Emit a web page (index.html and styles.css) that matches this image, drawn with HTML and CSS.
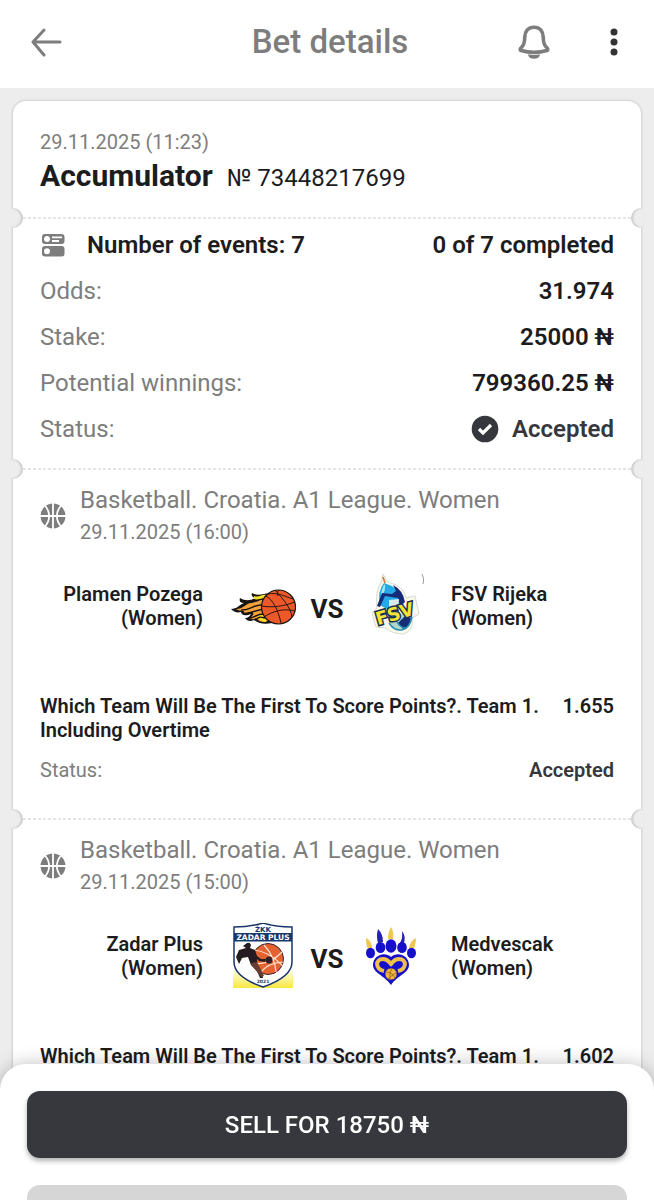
FILE: index.html
```html
<!DOCTYPE html>
<html lang="en">
<head>
<meta charset="utf-8">
<meta name="viewport" content="width=device-width, initial-scale=1">
<title>Bet details</title>
<link rel="stylesheet" href="styles.css">
</head>
<body>
<svg class="defs" aria-hidden="true">
  <symbol id="basketball" viewBox="0 0 26 26">
    <circle cx="13" cy="13" r="12.500" fill="#7d7d7d"/>
    <path d="M13 0v26M0 13h26M5 2.500C10.500 9 10.500 17 5 23.500M21 2.500C15.500 9 15.500 17 21 23.500" fill="none" stroke="#fff" stroke-width="1.800"/>
  </symbol>
</svg>
<div class="app">
  <header class="topbar">
    <button class="icon-button" type="button" aria-label="Back">
      <svg width="32" height="30" viewBox="0 0 32 30"><path d="M14 3L3 15L14 28M3 15H30" fill="none" stroke="#7d7d7d" stroke-width="3" stroke-linecap="round" stroke-linejoin="round"/></svg>
    </button>
    <h1 class="topbar-title">Bet details</h1>
    <div class="topbar-actions">
      <button class="icon-button" type="button" aria-label="Notifications">
        <svg width="32" height="34" viewBox="0 0 32 34"><path d="M16 2.200C10 2.200 7 6.500 6.800 12C6.600 18.500 5.500 20.500 2.500 23.500C2 24.500 2.200 25.300 3 25.600C11 27.800 21 27.800 29 25.600C29.800 25.300 30 24.500 29.500 23.500C26.500 20.500 25.400 18.500 25.200 12C25 6.500 22 2.200 16 2.200Z" fill="none" stroke="#7d7d7d" stroke-width="3.600"/><path d="M10 29.300Q16 30.500 22 29.300Q21.500 33.800 16 33.800T10 29.300Z" fill="#7d7d7d"/></svg>
      </button>
      <button class="icon-button" type="button" aria-label="More options">
        <svg width="8" height="28" viewBox="0 0 8 28" fill="#333"><circle cx="4" cy="4" r="3.500"/><circle cx="4" cy="14" r="3.500"/><circle cx="4" cy="24" r="3.500"/></svg>
      </button>
    </div>
  </header>

  <main class="content">
    <article class="ticket">
      <section class="ticket-part ticket-head">
        <time class="small muted">29.11.2025 (11:23)</time>
        <div class="ticket-title">
          <h2>Accumulator</h2>
          <span>№ 73448217699</span>
        </div>
      </section>

      <section class="ticket-part summary">
        <div class="row strong">
          <span class="row-label">
            <svg width="26" height="24" viewBox="0 0 26 24"><rect x="2" y="1" width="22.500" height="10" rx="3" fill="#7d7d7d"/><rect x="2" y="13" width="22.500" height="10.500" rx="3" fill="#7d7d7d"/><circle cx="7" cy="6" r="3" fill="#fff"/><circle cx="7" cy="18.200" r="3" fill="#fff"/><path d="M12 4.300H22M12 8H19" stroke="#fff" stroke-width="1.800"/></svg>
            Number of events: 7
          </span>
          <span>0 of 7 completed</span>
        </div>
        <div class="row"><span class="muted">Odds:</span><span class="strong">31.974</span></div>
        <div class="row"><span class="muted">Stake:</span><span class="strong">25000 ₦</span></div>
        <div class="row"><span class="muted">Potential winnings:</span><span class="strong">799360.25 ₦</span></div>
        <div class="row">
          <span class="muted">Status:</span>
          <span class="status strong">
            <svg width="28" height="28" viewBox="0 0 28 28"><circle cx="14" cy="14" r="13.300" fill="#36373d"/><path d="M8 14L12 18L20 10" fill="none" stroke="#fff" stroke-width="3.200"/></svg>
            Accepted
          </span>
        </div>
      </section>

      <section class="ticket-part event">
        <div class="league">
          <svg width="26" height="26"><use href="#basketball"/></svg>
          <div>
            <h3 class="muted">Basketball. Croatia. A1 League. Women</h3>
            <time class="small muted">29.11.2025 (16:00)</time>
          </div>
        </div>
        <div class="match">
          <span class="team home">Plamen Pozega (Women)</span>
          <svg class="logo" viewBox="0 0 66 66" aria-hidden="true">
            <path d="M1 36C7 36 9 32 14 30C10 30 9 28 10 25C15 28 20 28 25 25C22 24 21 22 22 20C28 24 34 20 41 20L42 50C34 52 28 50 24 47C20 49 17 48 15 45C18 45 20 43 21 41C14 44 11 41 11 39C7 40 4 39 1 36Z" fill="#171411"/>
            <path d="M6 36C14 36 17 29 24 29C30 29 31 24 37 22L38 48C32 50 28 48 26 45C23 47 21 46 20 45C25 41 24 38 19 39C15 40 13 40 14 38C10 38 8 37 6 36Z" fill="#f6a13b"/>
            <path d="M24 23C29 25 32 21 37 22C33 27 29 27 24 26ZM29 41C26 44 30 49 36 49L37 43Z" fill="#f9df29"/>
            <path d="M11 27C19 33 25 27 33 26M11 37C20 38 24 31 32 32M17 41C25 38 27 37 34 36M20 45C26 44 26 41 34 41M26 47C29 43 31 44 35 45" fill="none" stroke="#171411" stroke-width="1.500"/>
            <circle cx="48.500" cy="34" r="17" fill="#ed5828" stroke="#171411" stroke-width="1.200"/>
            <path d="M32 33C42 35 55 33 65 29M36 23C42 26 48 36 51 50M38 21C48 19 56 24 63 26M45 17C53 26 61 35 62 44M34 44C43 38 54 35 65 38M49 17C47 19 47 21 48 23" fill="none" stroke="#27150f" stroke-width="1"/>
          </svg>
          <span class="versus">VS</span>
          <svg class="logo" viewBox="0 0 66 66" aria-hidden="true">
            <path d="M25 1L30 9Q46 13 48 25L57 23L61 41L54 45Q56 57 46 61Q34 61 28 55L18 54L14 40L19 35Q17 17 23 10Z" fill="#fcfbea" stroke="#d3dad8" stroke-width="1"/>
            <path d="M25 4L27 10" stroke="#df7d36" stroke-width="1.800"/>
            <path d="M22 32Q19 18 26 10Q41 14 46 28L45 34L32 38Z" fill="#24a9e6"/>
            <path d="M27 11Q23 15 23 24Q28 18 27 11Z" fill="#a5e7f3"/>
            <path d="M35 12Q45 17 47 29L42 33L40 25L27 23L22 34L19 33L24 20L34 21L38 18Z" fill="#172c77"/>
            <path d="M31 27L41 26L40 38L31 39Z" fill="#d9e9e8"/>
            <path d="M30 46Q33 57 43 57Q53 56 53 45L49 39Z" fill="#b5d6cd"/>
            <path d="M47 43L53 45Q52 55 45 56L40 50Z" fill="#172c77"/>
            <path d="M31 50Q36 58 44 57Q52 55 54 44M39 49Q42 55 49 55" fill="none" stroke="#2391b2" stroke-width="1.500"/>
            <g transform="rotate(-16 37 40)" font-family="DejaVu Sans" font-size="18" font-weight="700" fill="#f8e435" stroke="#173252" stroke-width="3" paint-order="stroke"><text x="17" y="47">F</text><text x="29" y="47">S</text><text x="42" y="47">V</text></g>
            <path d="M64 1Q67 6 65 11" fill="none" stroke="#9a9a9a" stroke-width="1"/>
          </svg>
          <span class="team">FSV Rijeka (Women)</span>
        </div>
        <div class="bet">
          <p>Which Team Will Be The First To Score Points?. Team 1. Including Overtime</p>
          <strong>1.655</strong>
        </div>
        <div class="bet-status"><span class="muted">Status:</span><strong>Accepted</strong></div>
      </section>

      <section class="ticket-part event">
        <div class="league">
          <svg width="26" height="26"><use href="#basketball"/></svg>
          <div>
            <h3 class="muted">Basketball. Croatia. A1 League. Women</h3>
            <time class="small muted">29.11.2025 (15:00)</time>
          </div>
        </div>
        <div class="match">
          <span class="team home">Zadar Plus (Women)</span>
          <svg class="logo" viewBox="0 0 66 66" aria-hidden="true">
            <defs><linearGradient id="glow" x2="0" y2="1"><stop offset="0" stop-color="#fffef0"/><stop offset="1" stop-color="#f8e83f"/></linearGradient></defs>
            <path d="M3 46H63V65H3Z" fill="url(#glow)"/>
            <path d="M4 4Q20 4 33 0Q46 4 62 4V39Q62 54 33 64Q4 54 4 39Z" fill="#fff" stroke="#19346c" stroke-width="1.500"/>
            <path d="M4 10H62V18.500H4Z" fill="#17376f"/>
            <text x="33" y="9" text-anchor="middle" font-family="DejaVu Sans" font-size="7" font-weight="700" fill="#19346c">ŽKK</text>
            <text x="33" y="17" text-anchor="middle" font-family="DejaVu Sans" font-size="7.500" font-weight="700" fill="#fff">ZADAR PLUS</text>
            <circle cx="38" cy="36" r="15.500" fill="#e56231" stroke="#3b2930" stroke-width="1"/>
            <path d="M24 27Q38 28 53 43M34 22Q45 34 46 49M24 40Q39 43 52 29M31 49Q38 40 53 39" fill="none" stroke="#ffe5d3" stroke-width="1.200"/>
            <path d="M17 20Q20 19 21 22L20 25L25 27L27 33L31 36L36 36L35 39L29 38L27 36L27 42L31 47L33 55L30 55L27 48L21 42L18 34L12 35L9 41L6 34L9 27L16 25L13 23Z" fill="#251b22"/>
            <circle cx="39" cy="37" r="3.500" fill="#30222a"/>
            <path d="M20 40L27 39L34 53L31 54Z" fill="#673d32"/>
            <text x="33" y="59.500" text-anchor="middle" font-family="DejaVu Sans" font-size="4.500" font-weight="700" fill="#19346c">2021</text>
          </svg>
          <span class="versus">VS</span>
          <svg class="logo" viewBox="0 0 66 66" aria-hidden="true">
            <g fill="#f0c650"><path d="M8 15Q14 18 14 25L11 28Q8 24 8 15Z"/><path d="M33 4Q36 9 35 16H30Q30 9 33 4Z"/><path d="M58 15Q52 18 51 25L55 27Q58 22 58 15Z"/></g>
            <g fill="#2520ae"><path d="M20 6Q25 11 25 19L20 20Q18 13 20 6Z"/><path d="M44 8Q48 13 46 20L42 20Q45 15 44 8Z"/></g>
            <g fill="#1710ca"><ellipse cx="12.500" cy="30" rx="4.500" ry="5.200"/><ellipse cx="22.500" cy="24.500" rx="4.800" ry="5.500"/><ellipse cx="33" cy="23" rx="5.500" ry="6.700"/><ellipse cx="44" cy="24.500" rx="4.800" ry="5.500"/><ellipse cx="53.500" cy="30" rx="4.500" ry="5.200"/><path d="M33 34C27 28 15 32 15 42C15 50 26 52 33 62C40 52 51 50 51 42C51 32 39 28 33 34Z"/></g>
            <path d="M26 48C17 46 17 36 25 36C30 36 31 39 33 41C35 39 36 36 41 36C49 36 49 46 40 48" fill="none" stroke="#efc14b" stroke-width="4"/>
            <circle cx="33" cy="51" r="6" fill="#edb33b" stroke="#24208d" stroke-width=".7"/>
            <path d="M28 49Q34 49 37 55M30 56Q34 52 38 50M34 45Q31 49 32 57" fill="none" stroke="#8c5b22" stroke-width=".7"/>
          </svg>
          <span class="team">Medvescak (Women)</span>
        </div>
        <div class="bet">
          <p>Which Team Will Be The First To Score Points?. Team 1. Including Overtime</p>
          <strong>1.602</strong>
        </div>
        <div class="bet-status"><span class="muted">Status:</span><strong>Accepted</strong></div>
      </section>
    </article>
  </main>

  <footer class="sheet">
    <button class="sell" type="button">SELL FOR 18750 ₦</button>
    <button class="sell secondary" type="button" aria-label="More sale options"></button>
  </footer>
</div>
</body>
</html>
```

FILE: styles.css
```css
* {
  box-sizing: border-box;
}

body {
  margin: 0;
  background: #ededed;
  color: #1c1c1e;
  font-family: Roboto, "Liberation Sans", sans-serif;
  font-size: 24px;
  line-height: 28px;
}

h1, h2, h3, p {
  margin: 0;
}

svg {
  display: block;
  flex: none;
}

.defs {
  position: absolute;
  width: 0;
  height: 0;
}

.app {
  display: flex;
  flex-direction: column;
  height: 100vh;
}

/* Top bar */
.topbar {
  display: grid;
  grid-template-columns: 1fr auto 1fr;
  align-items: center;
  flex: none;
  padding: 20px 30px 24px;
  background: #fff;
}

.topbar-title {
  padding-left: 6px;
  color: #7d7d7d;
  font-size: 33px;
  line-height: 44px;
  font-weight: 500;
}

.topbar-actions {
  display: flex;
  align-items: center;
  justify-content: flex-end;
  gap: 60px;
  padding-right: 6px;
}

.icon-button {
  justify-self: start;
  padding: 0;
  border: 0;
  background: none;
  cursor: pointer;
}

/* Ticket */
.content {
  flex: 1;
  min-height: 0;
  overflow-y: auto;
  scrollbar-width: none;
  padding: 13px 13px 160px;
}

.ticket {
  border-radius: 13px;
  background: #fff;
  box-shadow: 0 0 3px rgba(0, 0, 0, 0.25);
}

.ticket-part {
  position: relative;
  padding: 0 27px;
}

.ticket-part + .ticket-part {
  background: repeating-linear-gradient(90deg, #e5e5e5 0 3px, transparent 3px 5px) 10px 0 / 100% 2px no-repeat;
}

.ticket-part + .ticket-part::before,
.ticket-part + .ticket-part::after {
  content: "";
  position: absolute;
  top: -9px;
  width: 12px;
  height: 20px;
  background: #ededed;
}

.ticket-part + .ticket-part::before {
  left: -2px;
  border-radius: 0 10px 10px 0;
  box-shadow: inset -2px 0 2px rgba(0, 0, 0, 0.14);
}

.ticket-part + .ticket-part::after {
  right: -2px;
  border-radius: 10px 0 0 10px;
  box-shadow: inset 2px 0 2px rgba(0, 0, 0, 0.14);
}

.muted {
  color: #7d7d7d;
  font-weight: 400;
}

.small {
  font-size: 20px;
}

.strong {
  font-weight: 600;
}

.ticket-part.ticket-head {
  display: flex;
  flex-direction: column;
  gap: 2px;
  padding-top: 29px;
  padding-bottom: 19px;
  line-height: 24px;
}

.ticket-title {
  display: flex;
  align-items: baseline;
  gap: 14px;
  line-height: 40px;
}

.ticket-title h2 {
  font-size: 30px;
  font-weight: 700;
}

.ticket-part.summary {
  display: flex;
  flex-direction: column;
  gap: 18px;
  padding-top: 14px;
  padding-bottom: 25px;
}

.row {
  display: flex;
  justify-content: space-between;
}

.row-label {
  display: flex;
  align-items: center;
  gap: 21px;
}

.status {
  display: flex;
  align-items: center;
  gap: 13px;
  color: #36373d;
}

/* Events */
.ticket-part.event {
  padding-top: 16px;
  padding-bottom: 36px;
}

.league {
  display: flex;
  align-items: center;
  gap: 14px;
  line-height: 32px;
}

.league h3 {
  font-size: 24px;
}

.league time {
  display: block;
}

.match {
  display: grid;
  grid-template-columns: 1fr 66px 62px 66px 1fr;
  align-items: center;
  margin-top: 25px;
  font-size: 20px;
  line-height: 24px;
  font-weight: 600;
}

.team {
  max-width: 180px;
  padding-left: 27px;
}

.team.home {
  justify-self: end;
  padding-left: 0;
  padding-right: 27px;
  text-align: right;
}

.logo {
  width: 66px;
  height: 66px;
}

.versus {
  padding-top: 6px;
  font-size: 26px;
  font-weight: 700;
  text-align: center;
}

.bet {
  display: flex;
  justify-content: space-between;
  gap: 20px;
  margin-top: 55px;
  font-size: 20px;
  line-height: 24px;
  font-weight: 600;
}

.bet strong,
.bet-status strong {
  font-weight: 600;
}

.bet-status {
  display: flex;
  justify-content: space-between;
  margin-top: 16px;
  font-size: 20px;
  line-height: 24px;
}

.bet-status strong {
  color: #36373d;
}

/* Bottom sheet, the second action peeks in at the lower edge */
.sheet {
  position: fixed;
  left: 0;
  right: 0;
  bottom: 0;
  display: flex;
  flex-direction: column;
  gap: 27px;
  max-height: 136px;
  overflow: hidden;
  padding: 27px 27px 0;
  border-radius: 26px 26px 0 0;
  background: #fff;
  box-shadow: 0 2px 20px rgba(0, 0, 0, 0.3);
}

.sell {
  flex: none;
  height: 67px;
  border: 0;
  border-radius: 13px;
  background: #36383d;
  box-shadow: 0 3px 5px rgba(0, 0, 0, 0.3);
  color: #fff;
  font: 500 24px/28px Roboto, "Liberation Sans", sans-serif;
  cursor: pointer;
}

.sell.secondary {
  background: #d6d6d6;
  box-shadow: none;
}
```
